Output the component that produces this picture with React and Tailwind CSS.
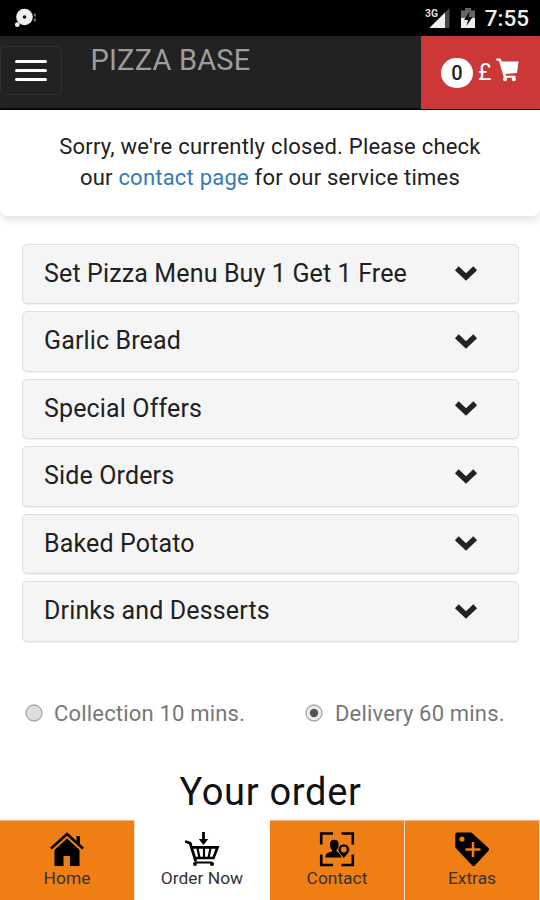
const categories = [
  'Set Pizza Menu Buy 1 Get 1 Free',
  'Garlic Bread',
  'Special Offers',
  'Side Orders',
  'Baked Potato',
  'Drinks and Desserts',
]

const tabs = [
  { label: 'Home', icon: HomeIcon },
  { label: 'Order Now', icon: OrderIcon, active: true },
  { label: 'Contact', icon: ContactIcon },
  { label: 'Extras', icon: ExtrasIcon },
]

export default function App() {
  return (
    <div className="flex h-[900px] w-[540px] flex-col overflow-hidden bg-white font-['Roboto',sans-serif] text-[#212121]">
      <StatusBar />
      <Header />

      {/* Closed notice */}
      <section className="h-[106px] shrink-0 rounded-b-lg bg-white pt-[21px] text-center text-[22px] leading-[31px] tracking-[0.22px] shadow-[0_4px_10px_rgba(0,0,0,0.12)]">
        <p>Sorry, we're currently closed. Please check</p>
        <p>
          our <a className="text-[#337ab7]">contact page</a> for our service times
        </p>
      </section>

      {/* Menu categories */}
      <main className="mt-[27.5px] flex shrink-0 flex-col gap-[7px] pr-[21px] pl-[22px]">
        {categories.map(name => (
          <button
            key={name}
            className="flex h-[60.5px] items-center justify-between rounded-[5px] border border-[#dedede] bg-[#f5f5f5] pr-[40px] pl-[21px] shadow-[0_1px_1px_rgba(0,0,0,0.06)]"
          >
            <span className="text-[25px] leading-[30px] tracking-[0.14px] whitespace-nowrap">{name}</span>
            <Chevron />
          </button>
        ))}
      </main>

      {/* Delivery type */}
      <div className="mt-[56.5px] flex h-[32px] shrink-0 items-center pl-[25px] text-[22px] leading-[32px] tracking-[0.18px] text-[#777]">
        <label className="flex w-[280px] items-center gap-[11px]">
          <Radio />
          <span>Collection 10 mins.</span>
        </label>
        <label className="flex items-center gap-[12px]">
          <Radio checked />
          <span>Delivery 60 mins.</span>
        </label>
      </div>

      <h2 className="mt-[39px] h-[46px] shrink-0 pl-px text-center text-[38px] leading-[46px] tracking-[0.7px] text-[#111]">Your order</h2>

      {/* Bottom tabs */}
      <nav className="mt-auto grid h-[80px] shrink-0 grid-cols-4">
        {tabs.map(t => (
          <Tab key={t.label} tab={t} />
        ))}
      </nav>
    </div>
  )
}

function StatusBar() {
  return (
    <div className="flex h-[36px] shrink-0 items-center justify-between bg-black pr-[11px] pl-[14px]">
      <svg width="24" height="36" viewBox="14 0 24 36">
        <circle cx="24.5" cy="17" r="8.3" fill="#eee" />
        <circle cx="24.5" cy="17" r="1.8" fill="#111" />
        <circle cx="17.3" cy="24.7" r="2.4" fill="#eee" />
        <path d="M34.8 13.5v3M34.8 18.5v3" stroke="#777" strokeWidth="2" />
      </svg>
      <div className="flex items-center">
        <svg width="60" height="36" viewBox="426 0 60 36">
          <text x="426" y="17.3" fontSize="11.5" fontWeight="700" fill="#ddd" textLength="13" lengthAdjust="spacingAndGlyphs">3G</text>
          <path d="M450.5 8v20h-5V13z" fill="#484848" />
          <path d="M446 12.500V28H430.300z" fill="#eee" />
          <path d="M466 8h6v2.500h4V19h-14v-8.500h4z" fill="#666" />
          <path d="M462 18h14v10h-14z" fill="#eee" />
          <path d="M471 11l-6 9h4l-1.500 6 6-9h-4z" fill="#080808" />
        </svg>
        <span className="text-[22.5px] leading-[36px] font-medium text-[#eee]">7:55</span>
      </div>
    </div>
  )
}

function Header() {
  return (
    <header className="flex h-[74px] shrink-0 border-b-2 border-[#0b0b0b] bg-[#222]">
      <button className="mt-[10px] flex h-[49px] w-[62px] flex-col items-center justify-center gap-[6px] rounded-[5px] border border-[#303030]">
        <span className="h-[3px] w-[32px] rounded-full bg-white" />
        <span className="h-[3px] w-[32px] rounded-full bg-white" />
        <span className="h-[3px] w-[32px] rounded-full bg-white" />
      </button>
      <h1 className="ml-[28.5px] h-[48px] text-[29px] leading-[48px] tracking-[0.2px] whitespace-nowrap text-[#9d9d9d]">PIZZA BASE</h1>
      <a className="ml-auto flex h-[73px] w-[119px] items-center bg-[#cb3837] pl-[20px] text-white">
        <span className="flex h-[30px] w-[32px] items-center justify-center rounded-full bg-white text-[20px] font-medium text-[#222]">0</span>
        <span className="ml-[5px] text-[23px] leading-[30px]">£</span>
        <svg className="mb-[5px] ml-[5px]" width="23" height="24" viewBox="0 0 23 24" fill="white">
          <path d="M.5.500h4l1.300 3H22.500l-1.500 11.500-11.500 1 .5 1.800H19.500v2H7.800L3 2.800H.500z" />
          <circle cx="9" cy="21.200" r="2" />
          <circle cx="17.800" cy="21.200" r="2" />
        </svg>
      </a>
    </header>
  )
}

function Chevron() {
  return (
    <svg className="mb-px" width="24" height="16" viewBox="0 0 24 16">
      <path d="M2.800 3.200 12 12l9.200-8.800" fill="none" stroke="#222" strokeWidth="5.400" />
    </svg>
  )
}

function Radio({ checked }) {
  return (
    <svg width="18" height="18" viewBox="0 0 18 18" className="mb-[2px] shrink-0">
      <circle cx="9" cy="9" r="8" fill={checked ? '#eee' : '#dedede'} stroke="#a6a6a6" strokeWidth="1.300" />
      {checked && <circle cx="9" cy="9" r="4.200" fill="#555" />}
    </svg>
  )
}

function Tab({ tab }) {
  const Icon = tab.icon
  return (
    <a
      className={`flex flex-col items-center ${
        tab.active ? 'bg-white pt-[11px] pr-px' : 'border-t border-r border-t-[#f6b27a] border-r-[#fbe3cf] bg-[#ef7f15] pt-[10px]'
      }`}
    >
      <Icon />
      <span className="text-[17.4px] leading-[22px] whitespace-nowrap text-[#333]">{tab.label}</span>
    </a>
  )
}

function HomeIcon() {
  return (
    <svg width="36" height="36" viewBox="0 0 36 36">
      <path d="M27.500 5h3.500v9l-3.500-3.300z" />
      <path d="M2 17.500 18 3l16 14.500" fill="none" stroke="black" strokeWidth="2.600" />
      <path d="M18 7.500 30.500 19v16H21V25h-6.500v10H5.500V19z" />
    </svg>
  )
}

function OrderIcon() {
  return (
    <svg width="36" height="36" viewBox="0 0 36 36" fill="none" stroke="black">
      <path d="M2.200 10.800l4 1.500L11.500 29.500" strokeWidth="2.800" strokeLinecap="round" />
      <path d="M8 16.300H33.500L29.500 27H11" strokeWidth="2.700" />
      <path d="M13.500 17l2 10M20 17v10M26.500 17l-2 10" strokeWidth="2.200" />
      <path d="M11 31.500H28" strokeWidth="2" />
      <path d="M19.500 1v9" strokeWidth="2.800" />
      <path d="M14.800 8h9.400L19.500 14z" fill="black" stroke="none" />
      <circle cx="11" cy="33" r="2" fill="black" stroke="none" />
      <circle cx="28" cy="33" r="2" fill="black" stroke="none" />
    </svg>
  )
}

function ContactIcon() {
  return (
    <svg width="36" height="36" viewBox="0 0 36 36">
      <path d="M2.200 13.500V2.500H14M22.500 2.500H33.800V13.500M33.800 23.500V34H22.500M14 34H2.200V23.500" fill="none" stroke="black" strokeWidth="2.600" />
      <path d="M11 12c0-4.500 8.500-4.500 8.500 0v2.500c0 2.300-1 3.700-2 4.500v1.500l3.500 1.500 1.500 4.500H6.500c0-4 2-5 6.500-6V19c-1-.8-2-2.200-2-4.500z" />
      <path d="M24.800 27.500c-2.500-3.500-5.800-5.500-5.800-8.800a5.800 5.800 0 0 1 11.600 0c0 3.300-3.300 5.300-5.800 8.800z" stroke="#ef7f15" strokeWidth=".8" />
      <circle cx="24.800" cy="18.500" r="2.900" fill="#ef7f15" />
    </svg>
  )
}

function ExtrasIcon() {
  return (
    <svg width="36" height="36" viewBox="0 0 36 36">
      <path d="M3 1.500h14.500L34.500 17q1 1.500 0 2.700L20.800 34.500q-1.300 1-2.600 0L1.300 16.500V3.500q0-2 1.700-2z" />
      <circle cx="8" cy="8" r="2.600" fill="#ef7f15" />
      <path d="M19 11v15M11.500 18.500h15" stroke="#ef7f15" strokeWidth="2.500" />
    </svg>
  )
}
